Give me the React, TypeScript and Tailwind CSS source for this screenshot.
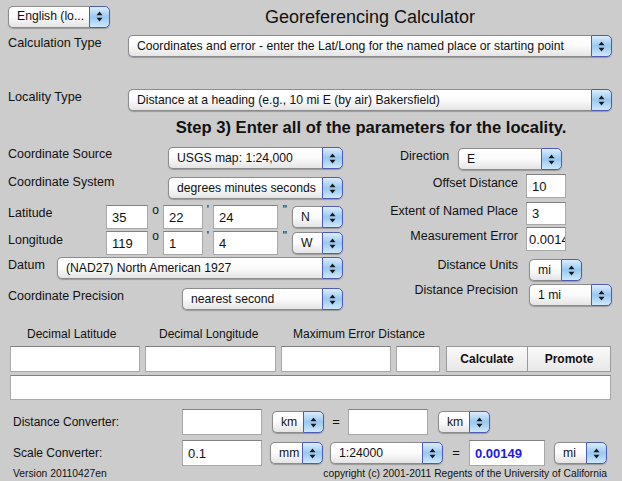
import React from 'react';

const Arrows = () => (
  <svg width="7" height="11" viewBox="0 0 7 11">
    <polygon points="3.5,0.5 6.5,4.2 0.5,4.2" fill="#1a1a1a" />
    <polygon points="0.5,6.8 6.5,6.8 3.5,10.5" fill="#1a1a1a" />
  </svg>
);

const Select = ({ text, className = '' }: { text: string; className?: string }) => (
  <div className={`flex h-[22px] shrink-0 shadow-[0_1px_1px_rgba(0,0,0,0.25)] rounded-[5px] ${className}`}>
    <div className="flex-1 min-w-0 flex items-center pl-[8px] pr-[4px] border border-r-0 border-[#8c8c8c] rounded-l-[5px] bg-gradient-to-b from-white via-[#fbfbfb] to-[#e4e4e4] text-[12.2px] text-[#111] whitespace-nowrap overflow-hidden">
      {text}
    </div>
    <div className="w-[21px] flex items-center justify-center border border-[#4d5bb5] rounded-r-[5px] bg-gradient-to-b from-[#dcedfc] via-[#98c8f2] to-[#cfe8fd]">
      <Arrows />
    </div>
  </div>
);

const Field = ({ value = '', className = '' }: { value?: string; className?: string }) => (
  <input
    readOnly
    value={value}
    className={`shrink-0 bg-white border border-[#a8a8a8] border-t-[#808080] pl-[5px] text-[13px] text-[#111] outline-none ${className}`}
  />
);

export default function App() {
  return (
    <div className="w-[622px] h-[481px] overflow-hidden bg-[#cccccc] text-[#111] font-['Liberation_Sans',Arial,sans-serif] pt-[5px]">
      {/* header */}
      <div className="flex items-center h-[23px]">
        <Select text="English (lo..." className="ml-[8px] w-[102px]" />
        <div className="flex-1 text-center text-[18px] leading-[22px] pl-[8px]">Georeferencing Calculator</div>
      </div>

      {/* calculation type */}
      <div className="flex items-start mt-[7px]">
        <div className="w-[128px] pl-[8px] text-[12.7px] leading-[16px]">Calculation Type</div>
        <Select text="Coordinates and error - enter the Lat/Long for the named place or starting point" className="w-[484px]" />
      </div>

      {/* locality type */}
      <div className="flex items-start mt-[32px]">
        <div className="w-[128px] pl-[8px] text-[12.7px] leading-[16px]">Locality Type</div>
        <Select text="Distance at a heading (e.g., 10 mi E (by air) Bakersfield)" className="w-[484px]" />
      </div>

      <div className="mt-[7px] text-center text-[16.6px] font-bold leading-[20px] pl-[120px]">
        Step 3) Enter all of the parameters for the locality.
      </div>

      {/* parameters */}
      <div className="flex mt-[9px]">
        <div className="w-[343px] shrink-0 text-[12.5px]">
          <div className="flex items-start">
            <div className="w-[168px] pl-[8px] leading-[16px] -mt-[1px]">Coordinate Source</div>
            <Select text="USGS map: 1:24,000" className="w-[175px]" />
          </div>
          <div className="flex items-start mt-[8px]">
            <div className="w-[168px] pl-[8px] leading-[16px] -mt-[3px]">Coordinate System</div>
            <Select text="degrees minutes seconds" className="w-[175px]" />
          </div>
          <div className="flex items-start mt-[6px] h-[24px]">
            <div className="w-[106px] pl-[8px] leading-[16px]">Latitude</div>
            <Field value="35" className="w-[42px] h-[24px]" />
            <span className="w-[15px] text-center text-[12px] leading-[10px]">o</span>
            <Field value="22" className="w-[40px] h-[24px]" />
            <span className="w-[10px] text-center text-[12px] leading-[10px]">'</span>
            <Field value="24" className="w-[65px] h-[24px]" />
            <span className="w-[14px] text-center text-[12px] leading-[10px]">"</span>
            <Select text="N" className="w-[51px] mt-[1px]" />
          </div>
          <div className="flex items-start mt-[2px] h-[24px]">
            <div className="w-[106px] pl-[8px] leading-[16px] pt-[1px]">Longitude</div>
            <Field value="119" className="w-[42px] h-[24px]" />
            <span className="w-[15px] text-center text-[12px] leading-[10px]">o</span>
            <Field value="1" className="w-[40px] h-[24px]" />
            <span className="w-[10px] text-center text-[12px] leading-[10px]">'</span>
            <Field value="4" className="w-[65px] h-[24px]" />
            <span className="w-[14px] text-center text-[12px] leading-[10px]">"</span>
            <Select text="W" className="w-[51px] mt-[1px]" />
          </div>
          <div className="flex items-start mt-[2px]">
            <div className="w-[57px] pl-[8px] leading-[16px]">Datum</div>
            <Select text="(NAD27) North American 1927" className="w-[286px]" />
          </div>
          <div className="flex items-start mt-[9px]">
            <div className="w-[182px] pl-[8px] leading-[16px]">Coordinate Precision</div>
            <Select text="nearest second" className="w-[161px]" />
          </div>
        </div>

        <div className="flex-1 text-[12.5px]">
          <div className="flex items-start mt-[1px]">
            <div className="w-[115px] pl-[57px] leading-[16px]">Direction</div>
            <Select text="E" className="w-[104px]" />
          </div>
          <div className="flex items-start mt-[4px]">
            <div className="w-[175px] text-right leading-[16px] pt-[1px]">Offset Distance</div>
            <Field value="10" className="ml-[8px] w-[40px] h-[24px]" />
          </div>
          <div className="flex items-start mt-[4px]">
            <div className="w-[175px] text-right leading-[16px] pt-[1px]">Extent of Named Place</div>
            <Field value="3" className="ml-[8px] w-[40px] h-[23px]" />
          </div>
          <div className="flex items-start mt-[2px]">
            <div className="w-[175px] text-right leading-[16px] pt-[1px]">Measurement Error</div>
            <Field value="0.0014" className="ml-[8px] w-[40px] h-[24px] !pl-[2px]" />
          </div>
          <div className="flex items-start mt-[8px]">
            <div className="w-[175px] text-right leading-[16px] -mt-[2px]">Distance Units</div>
            <Select text="mi" className="ml-[11px] w-[53px]" />
          </div>
          <div className="flex items-start mt-[3px]">
            <div className="w-[175px] text-right leading-[16px] -mt-[2px]">Distance Precision</div>
            <Select text="1 mi" className="ml-[11px] w-[83px]" />
          </div>
        </div>
      </div>

      {/* results */}
      <div className="flex mt-[16px] text-[12px] leading-[16px]">
        <div className="w-[159px] pl-[27px]">Decimal Latitude</div>
        <div className="w-[134px]">Decimal Longitude</div>
        <div>Maximum Error Distance</div>
      </div>
      <div className="flex items-start mt-[4px] pl-[10px]">
        <Field className="w-[130px] h-[26px]" />
        <Field className="ml-[5px] w-[131px] h-[26px]" />
        <Field className="ml-[5px] w-[110px] h-[26px]" />
        <Field className="ml-[5px] w-[44px] h-[26px]" />
        <button className="ml-[6px] w-[82px] h-[26px] border border-[#9a9a9a] bg-gradient-to-b from-[#fafafa] to-[#e8e8e8] text-[12px] font-bold">
          Calculate
        </button>
        <button className="w-[83px] h-[26px] border border-l-0 border-[#9a9a9a] bg-gradient-to-b from-[#fafafa] to-[#e8e8e8] text-[12px] font-bold">
          Promote
        </button>
      </div>
      <div className="pl-[10px] mt-[3px]">
        <Field className="w-[601px] h-[25px]" />
      </div>

      {/* converters */}
      <div className="flex items-center mt-[9px] text-[12px]">
        <div className="w-[182px] pl-[13px]">Distance Converter:</div>
        <Field className="w-[80px] h-[26px]" />
        <Select text="km" className="ml-[10px] w-[52px]" />
        <div className="w-[24px] text-center text-[13px]">=</div>
        <Field className="w-[80px] h-[26px]" />
        <Select text="km" className="ml-[10px] w-[52px]" />
      </div>
      <div className="flex items-center mt-[5px] text-[12px]">
        <div className="w-[182px] pl-[13px]">Scale Converter:</div>
        <Field value="0.1" className="w-[80px] h-[26px]" />
        <Select text="mm" className="ml-[8px] w-[53px]" />
        <Select text="1:24000" className="ml-[7px] w-[113px]" />
        <div className="w-[26px] text-center text-[13px]">=</div>
        <Field value="0.00149" className="w-[76px] h-[26px] font-bold !text-[#1a1aee]" />
        <Select text="mi" className="ml-[9px] w-[53px]" />
      </div>
      <div className="flex justify-between mt-[1px] text-[10.3px] leading-[14px]">
        <div className="pl-[13px]">Version 20110427en</div>
        <div className="pr-[15px]">copyright (c) 2001-2011 Regents of the University of California</div>
      </div>
    </div>
  );
}
